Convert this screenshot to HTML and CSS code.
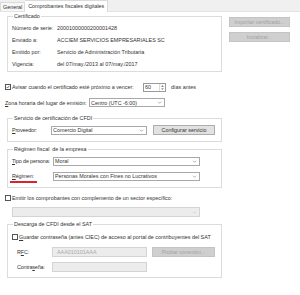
FILE: index.html
```html
<!DOCTYPE html>
<html lang="es">
<head>
    <meta charset="UTF-8">
    <title>Comprobantes fiscales digitales</title>
    <link rel="stylesheet" href="styles.css">
</head>
<body>
    <div class="tabs">
        <span class="tab">General</span>
        <span class="tab active">Comprobantes fiscales digitales</span>
    </div>

    <div class="panel">
        <div class="top">
            <fieldset class="group cert">
                <legend>Certificado</legend>
                <div class="info-row"><span class="lbl">Número de serie:</span><span>20001000000200001428</span></div>
                <div class="info-row"><span class="lbl">Enviado a:</span><span>ACCIEM SERVICIOS EMPRESARIALES SC</span></div>
                <div class="info-row"><span class="lbl">Emitido por:</span><span>Servicio de Administración Tributaria</span></div>
                <div class="info-row"><span class="lbl">Vigencia:</span><span>del 07/may./2013 al 07/may./2017</span></div>
            </fieldset>
            <div class="side-buttons">
                <button class="btn" disabled>Importar certificado...</button>
                <button class="btn" disabled>Incializar...</button>
            </div>
        </div>

        <div class="line avisar">
            <span class="check checked">
                <svg viewBox="0 0 6 6"><polyline points="1,3 2.4,4.5 5,1.2" /></svg>
            </span>
            <span class="avisar-text">Avisar cuando el certificado esté próximo a vencer:</span>
            <span class="spin">
                <span class="spin-val">60</span>
                <span class="spin-arrows">
                    <svg viewBox="0 0 5 8"><polygon points="1,3 4,3 2.5,1.5" /><polygon points="1,5 4,5 2.5,6.5" /></svg>
                </span>
            </span>
            <span class="after">días antes</span>
        </div>

        <div class="line zona">
            <span class="zona-lbl"><u>Z</u>ona horaria del lugar de emisión:</span>
            <div class="select zona-select">
                <span>Centro (UTC -6:00)</span>
                <svg class="chev" viewBox="0 0 6 4"><polyline points="1,1 3,3 5,1" /></svg>
            </div>
        </div>

        <fieldset class="group servicio">
            <legend>Servicio de certificación de CFDI</legend>
            <div class="field-row">
                <span class="field-lbl short"><u>P</u>roveedor:</span>
                <div class="select prov-select">
                    <span>Comercio Digital</span>
                    <svg class="chev" viewBox="0 0 6 4"><polyline points="1,1 3,3 5,1" /></svg>
                </div>
                <button class="btn enabled config">Configurar servicio</button>
            </div>
        </fieldset>

        <fieldset class="group regimen">
            <legend>Régimen fiscal&nbsp; de la empresa</legend>
            <div class="field-row">
                <span class="field-lbl"><u>T</u>ipo de persona:</span>
                <div class="select wide-select">
                    <span>Moral</span>
                    <svg class="chev" viewBox="0 0 6 4"><polyline points="1,1 3,3 5,1" /></svg>
                </div>
            </div>
            <div class="field-row second">
                <span class="field-lbl marked"><u>R</u>égimen:</span>
                <div class="select wide-select">
                    <span>Personas Morales con Fines no Lucrativos</span>
                    <svg class="chev" viewBox="0 0 6 4"><polyline points="1,1 3,3 5,1" /></svg>
                </div>
            </div>
        </fieldset>

        <div class="line emitir">
            <span class="check"></span>
            <span>Emitir los comprobantes con complemento de un sector específico:</span>
        </div>
        <div class="select disabled sector-select">
            <span></span>
            <svg class="chev" viewBox="0 0 6 4"><polyline points="1,1 3,3 5,1" /></svg>
        </div>

        <fieldset class="group descarga">
            <legend>Descarga de CFDI desde el SAT</legend>
            <div class="line guardar">
                <span class="check"></span>
                <span><u>G</u>uardar contraseña (antes CIEC) de acceso al portal de contribuyentes del SAT</span>
            </div>
            <div class="field-row sat-row">
                <span class="field-lbl sat-lbl">R<u>F</u>C:</span>
                <div class="input disabled">AAA010101AAA</div>
                <button class="btn probar" disabled>Probar conexión...</button>
            </div>
            <div class="field-row sat-row">
                <span class="field-lbl sat-lbl">Contra<u>s</u>eña:</span>
                <div class="input disabled"></div>
            </div>
        </fieldset>
    </div>
</body>
</html>
```

FILE: styles.css
```css
* {
    margin: 0;
    padding: 0;
    box-sizing: border-box;
}

body {
    font-family: "Liberation Sans", Arial, sans-serif;
    font-size: 5.4px;
    color: #333;
    background-color: #fff;
    width: 300px;
    height: 295px;
    overflow: hidden;
}

u {
    text-decoration-thickness: 0.5px;
}

.tabs {
    height: 12px;
    background-color: #f0f0f0;
    display: flex;
    align-items: flex-end;
    border-bottom: 1px solid #e3e3e3;
    white-space: nowrap;
}

.tab {
    height: 9px;
    line-height: 8px;
    padding: 0 2px;
    background-color: #f7f7f7;
    border: 1px solid #dadada;
    border-bottom: none;
}

.tab.active {
    height: 12px;
    line-height: 10px;
    padding: 0 3px;
    background-color: #fff;
    margin-bottom: -1px;
    border-left: none;
}

.panel {
    padding-left: 5px;
}

.group {
    border: 1px solid #dcdcdc;
    margin-left: 2px;
    width: 215px;
    padding: 0 4px;
}

.group legend {
    line-height: 7px;
    padding: 0 1px;
    margin-left: 1px;
}

.top {
    display: flex;
    align-items: flex-start;
}

.cert {
    margin-top: 1px;
    padding-top: 2px;
    padding-bottom: 1px;
}

.info-row {
    display: flex;
    height: 12px;
    align-items: center;
    white-space: nowrap;
}

.info-row .lbl {
    width: 45px;
    flex-shrink: 0;
}

.side-buttons {
    display: flex;
    flex-direction: column;
    gap: 5px;
    margin-left: 7px;
    padding-top: 5px;
}

.btn {
    font: inherit;
    height: 10px;
    width: 61px;
    border: 1px solid #c4c4c4;
    background-color: #cfcfcf;
    color: #a3a3a3;
    line-height: 8px;
    text-align: center;
    white-space: nowrap;
}

.btn.enabled {
    background-color: #e1e1e1;
    border-color: #adadad;
    color: #333;
}

.line {
    display: flex;
    align-items: center;
    height: 10px;
    white-space: nowrap;
}

.check {
    width: 6px;
    height: 6px;
    border: 1px solid #555;
    background-color: #fff;
    margin-right: 1px;
    flex-shrink: 0;
    display: flex;
}

.check svg {
    width: 100%;
    height: 100%;
    fill: none;
    stroke: #222;
    stroke-width: 0.9;
}

.avisar {
    margin-top: 10px;
}

.avisar-text {
    width: 131px;
}

.spin {
    display: flex;
    width: 23px;
    height: 9px;
    border: 1px solid #9a9a9a;
}

.spin-val {
    flex: 1;
    line-height: 7px;
    padding-left: 1px;
}

.spin-arrows {
    width: 6px;
    border-left: 1px solid #ddd;
    display: flex;
}

.spin-arrows svg {
    width: 100%;
    height: 100%;
    fill: #555;
}

.after {
    margin-left: 5px;
}

.zona {
    margin-top: 6px;
    height: 9px;
}

.zona-lbl {
    width: 84px;
}

.select {
    height: 9px;
    border: 1px solid #a8a8a8;
    background-color: #fff;
    display: flex;
    align-items: center;
    justify-content: space-between;
    padding: 0 2px 0 1px;
    white-space: nowrap;
}

.chev {
    width: 5px;
    height: 3px;
    fill: none;
    stroke: #666;
    stroke-width: 0.7;
}

.select.disabled {
    background-color: #ececec;
    border-color: #d4d4d4;
}

.select.disabled .chev {
    stroke: #c2c2c2;
}

.zona-select {
    width: 76px;
}

.servicio {
    margin-top: 8px;
    padding-top: 3px;
    padding-bottom: 6px;
}

.field-row {
    display: flex;
    align-items: center;
    height: 10px;
    white-space: nowrap;
}

.field-lbl {
    width: 41px;
    flex-shrink: 0;
    letter-spacing: -0.15px;
}

.field-lbl.short {
    width: 39px;
}

.prov-select {
    width: 96px;
}

.config {
    width: 62px;
    margin-left: 6px;
}

.regimen {
    margin-top: 4px;
    padding-top: 3px;
    padding-bottom: 6px;
}

.regimen .field-row.second {
    margin-top: 5px;
}

.wide-select {
    width: 147px;
}

.marked {
    position: relative;
}

.marked::after {
    content: "";
    position: absolute;
    left: -2px;
    top: 8px;
    width: 27px;
    height: 1.5px;
    background-color: #d9232e;
}

.emitir {
    margin-top: 5px;
}

.sector-select {
    width: 188px;
    height: 10px;
    margin-top: 4px;
    margin-left: 7px;
}

.descarga {
    margin-top: 4px;
    padding-top: 4px;
    padding-bottom: 5px;
}

.sat-row {
    margin-top: 5px;
    padding-left: 5px;
}

.sat-lbl {
    width: 35px;
}

.input {
    width: 95px;
    height: 10px;
    border: 1px solid #d4d4d4;
    line-height: 8px;
    padding-left: 4px;
}

.input.disabled {
    background-color: #ececec;
    color: #a8a8a8;
}

.probar {
    width: 63px;
    margin-left: 5px;
}
```
